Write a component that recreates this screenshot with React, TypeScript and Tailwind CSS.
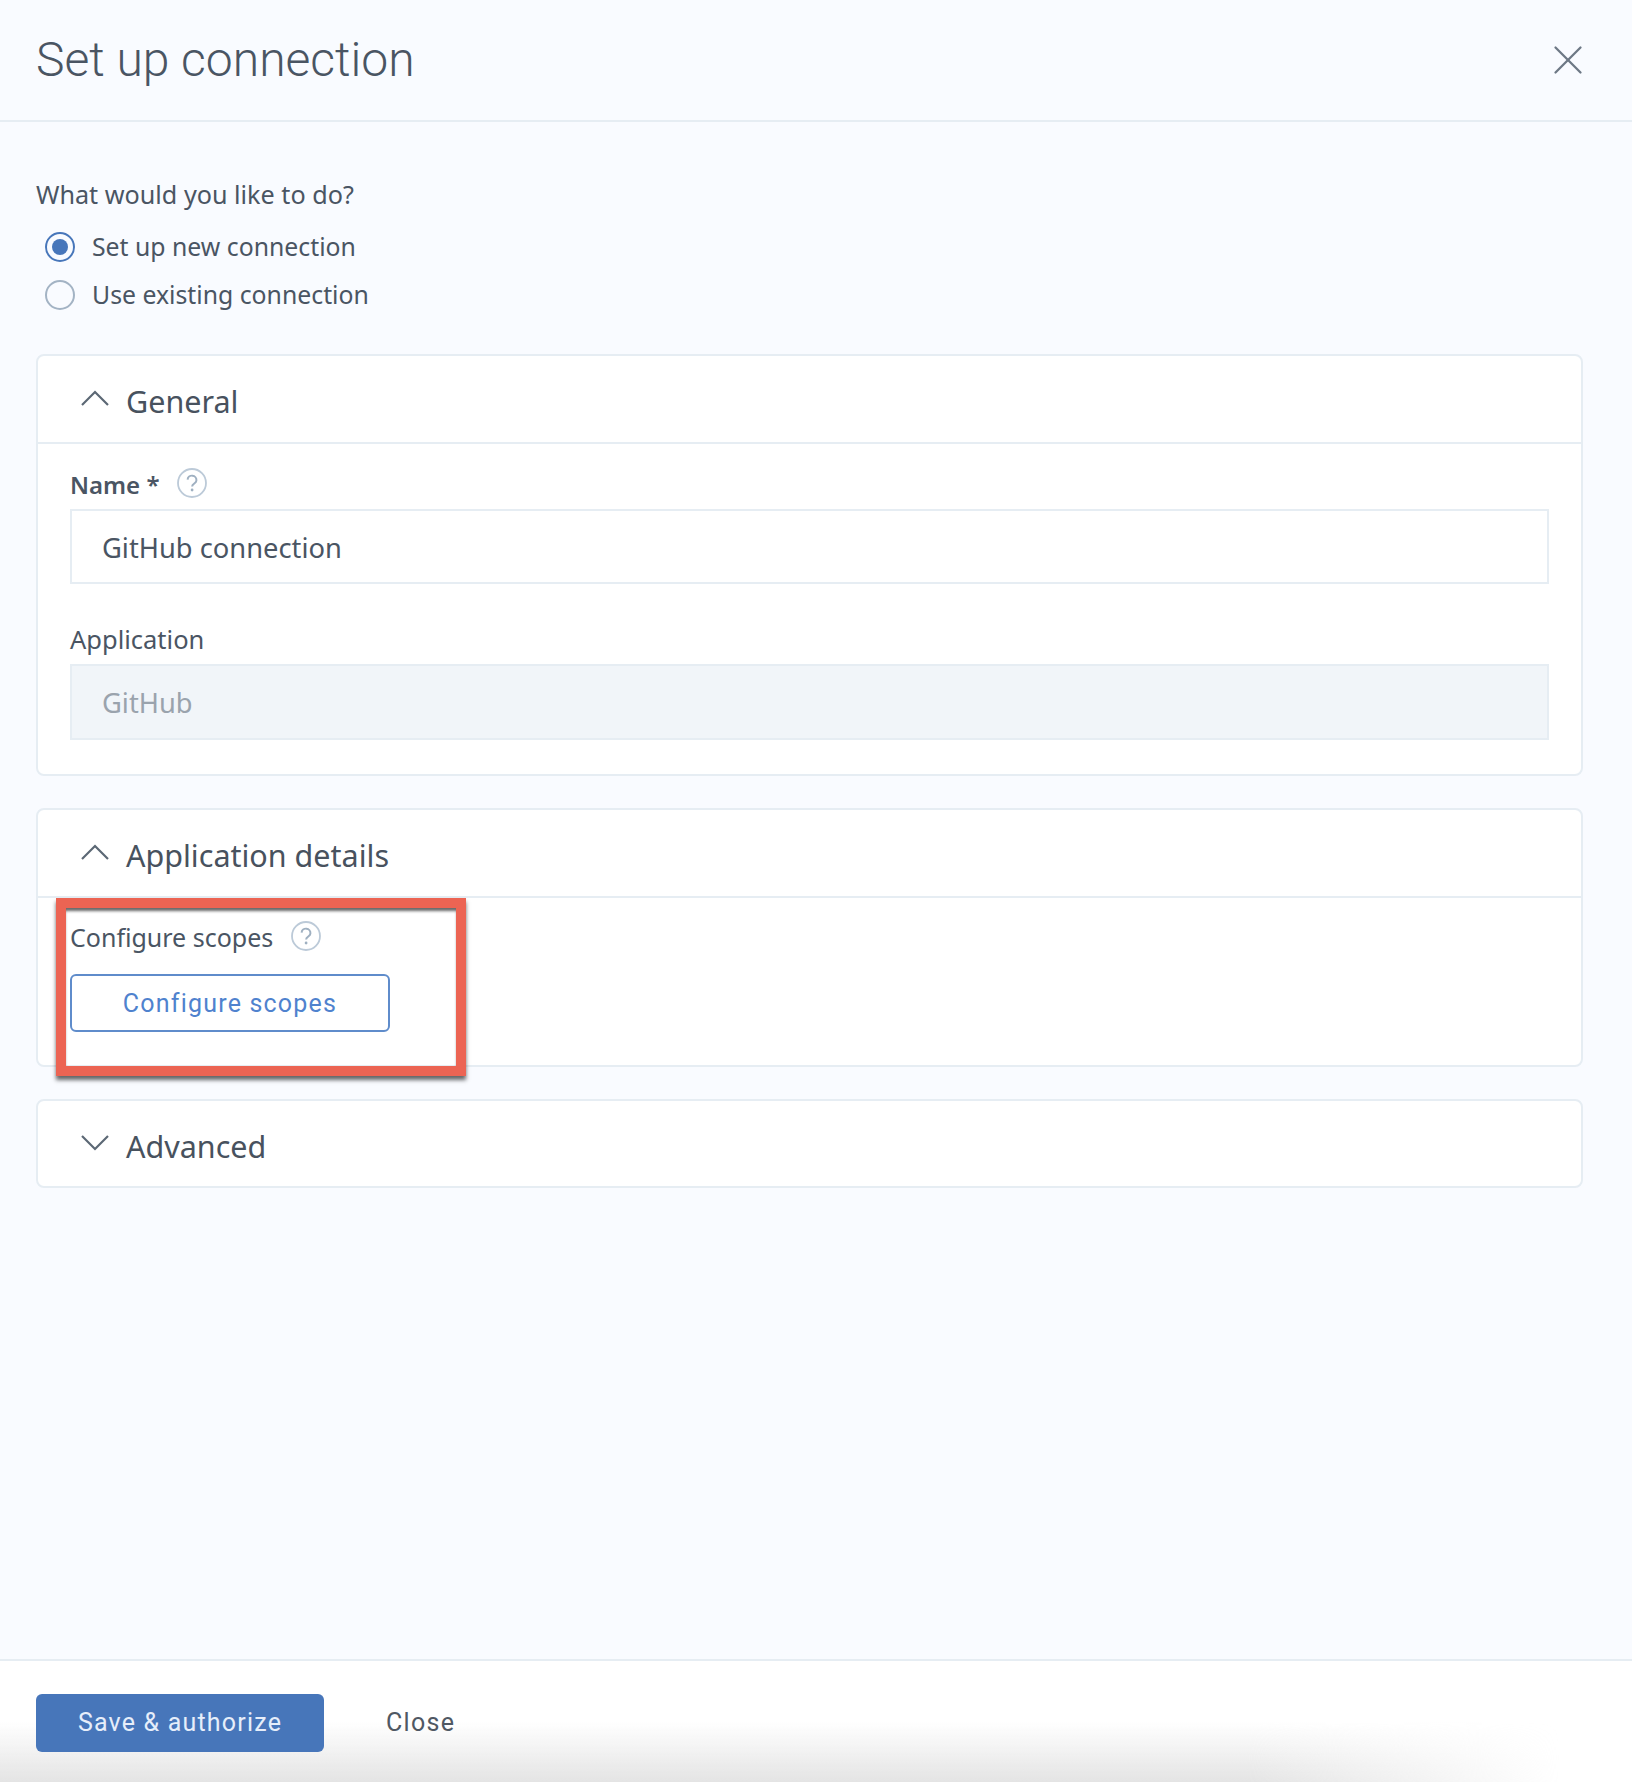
import React from "react";
import { X } from "lucide-react";

const bodyFont = "font-['Noto_Sans',sans-serif]";

const HelpIcon = () => (
  <svg width="30" height="30" viewBox="0 0 30 30" fill="none" className="mb-[4px] shrink-0">
    <circle cx="15" cy="15" r="14" stroke="#bccad8" strokeWidth="1.8" />
    <path d="M10.6 11.6a4.4 4.4 0 0 1 8.8.9c0 2.9-4.2 3-4.3 6" stroke="#9fb0c1" strokeWidth="2" fill="none" />
    <circle cx="15.1" cy="22" r="1.4" fill="#9fb0c1" />
  </svg>
);

const Chevron = ({ open }: { open: boolean }) => (
  <svg width="30" height="18" viewBox="0 0 30 18" fill="none" className="mb-[2px] shrink-0">
    <path d={open ? "M2 16 15 3l13 13" : "M2 2l13 13L28 2"} stroke="#5c6875" strokeWidth="2.2" />
  </svg>
);

const Radio = ({ checked, label }: { checked?: boolean; label: string }) => (
  <div className="flex h-[48px] items-center">
    <span
      className={`ml-[9px] flex h-[30px] w-[30px] items-center justify-center rounded-full border-2 ${
        checked ? "border-[#4776ba]" : "border-[#a3b3c4]"
      }`}
    >
      {checked && <span className="h-[16px] w-[16px] rounded-full bg-[#4776ba]" />}
    </span>
    <span className="ml-[17px] text-[24.8px] text-[#4a5563]">{label}</span>
  </div>
);

const Section = ({
  title,
  open = true,
  children,
}: {
  title: string;
  open?: boolean;
  children?: React.ReactNode;
}) => (
  <section className="rounded-[8px] border-2 border-[#e6edf3] bg-white">
    <div className={`flex items-center pl-[42px] ${children ? "h-[86px]" : "h-[85px]"}`}>
      <Chevron open={open} />
      <h2 className="ml-[16px] pt-[6px] text-[30.5px] text-[#48525e]">{title}</h2>
    </div>
    {children && <div className="border-t-2 border-[#e6edf3] px-[32px]">{children}</div>}
  </section>
);

export default function App() {
  return (
    <div className={`relative flex h-[1782px] w-[1632px] flex-col overflow-hidden bg-[#f9fbff] ${bodyFont}`}>
      <header className="flex h-[122px] shrink-0 items-center justify-between border-b-2 border-[#e6edf3] pl-[36px] pr-[39px]">
        <h1 className="font-['Roboto',sans-serif] text-[48px] font-light text-[#4a5563]">Set up connection</h1>
        <X className="h-[50px] w-[50px] text-[#6d7885]" strokeWidth={1.1} />
      </header>

      <main className="flex-1 pl-[36px] pr-[49px] pt-[54px]">
        <p className="h-[36px] text-[25.2px] leading-[36px] text-[#4a5563]">What would you like to do?</p>
        <div className="mt-[11px]">
          <Radio checked label="Set up new connection" />
          <Radio label="Use existing connection" />
        </div>

        <div className="mt-[35px] flex flex-col gap-[32px]">
          <Section title="General">
            <div className="flex h-[65px] items-center gap-[17px] pt-[16px]">
              <span className="text-[24px] font-semibold text-[#4a5563]">Name *</span>
              <HelpIcon />
            </div>
            <div className="flex h-[75px] items-center border-2 border-[#e6edf3] bg-white pl-[30px] pt-[3px] text-[27.3px] text-[#4a5563]">
              GitHub connection
            </div>
            <p className="mt-[31px] h-[49px] text-[25.5px] leading-[49px] text-[#4a5563]">Application</p>
            <div className="mb-[34px] flex h-[76px] items-center border-2 border-[#e6edf3] bg-[#f1f5f9] pl-[30px] pt-[3px] text-[27.3px] text-[#9aa3ad]">
              GitHub
            </div>
          </Section>

          <Section title="Application details">
            <div className="flex h-[76px] items-center gap-[18px] pt-[4px]">
              <span className="text-[25px] text-[#4a5563]">Configure scopes</span>
              <HelpIcon />
            </div>
            <button className="mb-[33px] block h-[58px] w-[320px] rounded-[6px] border-2 border-[#5f8ccb] bg-white pt-[2px] font-['Roboto',sans-serif] text-[25px] tracking-[1.2px] text-[#4f82ce]">
              Configure scopes
            </button>
          </Section>

          <Section title="Advanced" open={false} />
        </div>
      </main>

      <footer className="flex h-[123px] shrink-0 items-start border-t-2 border-[#e6edf3] bg-white pl-[36px] pt-[33px] font-['Roboto',sans-serif]">
        <button className="relative z-10 h-[58px] w-[288px] rounded-[6px] bg-[#4776ba] text-[25px] tracking-[1.2px] text-[#e6eefa]">
          Save &amp; authorize
        </button>
        <span className="relative z-10 ml-[62px] flex h-[58px] items-center text-[25px] tracking-[1.3px] text-[#4f5863]">Close</span>
      </footer>

      {/* window shadow bleeding in along the bottom edge */}
      <div className="pointer-events-none absolute bottom-0 left-0 h-[60px] w-[1560px] bg-[linear-gradient(to_bottom,rgba(225,225,225,0),rgba(225,225,225,0.9))] [mask-image:linear-gradient(to_right,black_80%,transparent)]" />

      {/* red annotation box */}
      <div className="pointer-events-none absolute left-[56px] top-[898px] h-[178px] w-[410px] border-[10px] border-[#ec6453] shadow-[0_4px_4px_rgba(40,40,40,0.7)]">
        <div className="h-full w-full shadow-[inset_0_4px_3px_-1px_rgba(40,40,40,0.7)]" />
      </div>
    </div>
  );
}
